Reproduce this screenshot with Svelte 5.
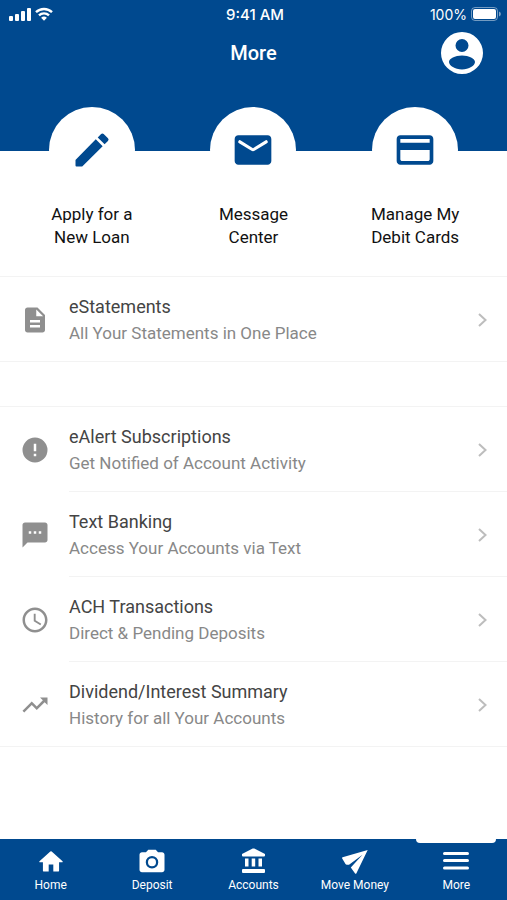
<script lang="ts">
  type Item = { title: string; detail: string; icon: string }

  const shortcuts = [
    { lines: ['Apply for a', 'New Loan'], icon: 'M3 17.6V20.5c0 .3.2.5.5.5h2.900c.2 0 .3 0 .4-.1L17.81 9.94l-3.75-3.75L3.100 17.250a.5.5 0 0 0-.1.350zM20.71 7.04a1 1 0 0 0 0-1.41l-2.34-2.34a1 1 0 0 0-1.41 0l-1.83 1.83 3.75 3.75 1.83-1.83z' },
    { lines: ['Message', 'Center'], icon: 'M20 4H4c-1.1 0-2 .9-2 2v12c0 1.1.9 2 2 2h16c1.1 0 2-.9 2-2V6c0-1.1-.9-2-2-2zm-.4 4.25l-6.54 4.09c-.65.41-1.47.41-2.12 0L4.4 8.25a.85.85 0 1 1 .9-1.44L12 11l6.7-4.19a.85.85 0 1 1 .9 1.44z' },
    { lines: ['Manage My', 'Debit Cards'], icon: 'M20 4H4c-1.11 0-2 .89-2 2v12c0 1.11.89 2 2 2h16c1.11 0 2-.89 2-2V6c0-1.11-.89-2-2-2zm-1 14H5c-.55 0-1-.45-1-1v-5h16v5c0 .55-.45 1-1 1zM20 8H4V6h16v2z' }
  ]

  const groups: Item[][] = [
    [
      { title: 'eStatements', detail: 'All Your Statements in One Place', icon: 'M14 2H6c-1.1 0-2 .9-2 2v16c0 1.1.89 2 1.99 2H18c1.1 0 2-.9 2-2V8l-6-6zm2 16H8v-2h8v2zm0-4H8v-2h8v2zm-3-5V3.5L18.5 9H13z' }
    ],
    [
      { title: 'eAlert Subscriptions', detail: 'Get Notified of Account Activity', icon: 'M12 2a10 10 0 1 0 0 20 10 10 0 0 0 0-20zm1 15h-2v-2h2v2zm0-4h-2V7h2v6z' },
      { title: 'Text Banking', detail: 'Access Your Accounts via Text', icon: 'M20 2H4c-1.1 0-2 .9-2 2v18l4-4h14c1.1 0 2-.9 2-2V4c0-1.1-.9-2-2-2zM9 11H7V9h2v2zm4 0h-2V9h2v2zm4 0h-2V9h2v2z' },
      { title: 'ACH Transactions', detail: 'Direct & Pending Deposits', icon: 'M11.99 2C6.47 2 2 6.48 2 12s4.47 10 9.99 10C17.52 22 22 17.52 22 12S17.52 2 11.99 2zM12 20c-4.42 0-8-3.58-8-8s3.58-8 8-8 8 3.58 8 8-3.58 8-8 8zm.5-13H11v6l5.25 3.15.75-1.23-4.5-2.67z' },
      { title: 'Dividend/Interest Summary', detail: 'History for all Your Accounts', icon: 'M16 6l2.29 2.29-4.88 4.88-4-4L2 16.59 3.41 18l6-6 4 4 6.3-6.29L22 12V6z' }
    ]
  ]

  const tabs = [
    { label: 'Home', box: '-1 -2 26 26', icon: 'M10 20v-6h4v6h4.5a.5.5 0 0 0 .5-.5V12h2.700a.4.4 0 0 0 .3-.7L12.600 2.700a1 1 0 0 0-1.200 0L2 11.300a.4.4 0 0 0 .3.7H5v7.500a.5.5 0 0 0 .5.5z' },
    { label: 'Deposit', box: '0 -1 24 24', icon: 'M12 8.8a3.2 3.2 0 1 0 0 6.4 3.2 3.2 0 0 0 0-6.4zM9 2L7.17 4H4c-1.1 0-2 .9-2 2v12c0 1.1.9 2 2 2h16c1.1 0 2-.9 2-2V6c0-1.1-.9-2-2-2h-3.17L15 2H9zm3 15a5 5 0 1 1 0-10 5 5 0 0 1 0 10z' },
    { label: 'Accounts', box: '0 0 30 30', icon: 'M14.700 2.600L4 8v1.500a1 1 0 0 0 1 1h21a1 1 0 0 0 1-1V8L16.300 2.600a2 2 0 0 0-1.600 0zM7 12.500h3.500V20.500H7zM13.700 12.500h3.500V20.500h-3.500zM20.500 12.500H24V20.500h-3.500zM5 23h21a1 1 0 0 1 1 1v2a1 1 0 0 1-1 1H5a1 1 0 0 1-1-1v-2a1 1 0 0 1 1-1z' },
    { label: 'Move Money', box: '0 0 30 30', icon: 'M27.700 4L2.600 11.200c-.6.2-.7.7-.4 1.200l3.300 5.600c.3.5.7.8 1.300.8H9L22.500 8.800 10.800 21.500l4.300 6c.4.5.9.4 1.200-.1z' },
    { label: 'More', box: '0 0 30 30', icon: 'M3.500 6h23a1.500 1.500 0 0 1 0 3h-23a1.500 1.500 0 0 1 0-3zM3.500 13h23a1.500 1.500 0 0 1 0 3h-23a1.500 1.500 0 0 1 0-3zM3.500 20.500h23a1.500 1.500 0 0 1 0 3h-23a1.500 1.500 0 0 1 0-3z' }
  ]

  let current = $state('More')
</script>

<div class="screen">
  <header>
    <div class="status">
      <div class="signal">
        <svg width="22" height="14" viewBox="0 0 22 14" aria-hidden="true">
          <rect x="0" y="9" width="4" height="5" rx="1" />
          <rect x="6" y="7" width="4" height="7" rx="1" />
          <rect x="12" y="4" width="4" height="10" rx="1" />
          <rect x="18" y="1" width="4" height="13" rx="1" />
        </svg>
        <svg width="18" height="14" viewBox="0 0 18 14" aria-hidden="true">
          <g fill="none" stroke="#fff" stroke-width="2.4">
            <path d="M1 5.2a11.5 11.5 0 0 1 16 0" />
            <path d="M4 8.4a7.2 7.2 0 0 1 10 0" />
          </g>
          <path d="M9 13.8l-2.9-3a4.2 4.2 0 0 1 5.8 0z" />
        </svg>
      </div>
      <time>9:41 AM</time>
      <div class="battery">
        <span>100%</span>
        <svg width="30" height="14" viewBox="0 0 30 14" aria-hidden="true">
          <rect x="0.5" y="0.5" width="26" height="13" rx="3.5" fill="none" stroke="#fff" opacity="0.45" />
          <rect x="2" y="2" width="23" height="10" rx="2" />
          <path d="M28 4.5v5a2.6 2.6 0 0 0 0-5z" opacity="0.5" />
        </svg>
      </div>
    </div>
    <div class="title">
      <h1>More</h1>
      <button class="profile" aria-label="Profile">
        <svg width="42" height="42" viewBox="0 0 42 42" aria-hidden="true">
          <path fill-rule="evenodd" d="M21 0a21 21 0 1 0 0 42 21 21 0 0 0 0-42zM21 7a6.5 6.5 0 1 1 0 13 6.5 6.5 0 0 1 0-13zM21 23.5c7 0 13 3 13 6.5s-6 7.5-13 7.5-13-4-13-7.5 6-6.5 13-6.5z" />
        </svg>
      </button>
    </div>
  </header>

  <nav class="shortcuts" aria-label="Shortcuts">
    {#each shortcuts as { lines, icon }}
      <button>
        <span class="circle">
          <svg width="44" height="44" viewBox="0 0 24 24" aria-hidden="true"><path d={icon} /></svg>
        </span>
        <span>{lines[0]}<br />{lines[1]}</span>
      </button>
    {/each}
  </nav>

  <main>
    {#each groups as items}
      <ul>
        {#each items as { title, detail, icon }}
          <li>
            <button>
              <svg class="icon" width="30" height="30" viewBox="0 0 24 24" aria-hidden="true"><path d={icon} /></svg>
              <span class="text">
                <span class="name">{title}</span>
                <span class="detail">{detail}</span>
              </span>
              <svg class="chevron" width="10" height="16" viewBox="0 0 10 16" aria-hidden="true">
                <path d="M1 2l6.5 6L1 14" />
              </svg>
            </button>
          </li>
        {/each}
      </ul>
    {/each}
  </main>

  <nav class="tabs" aria-label="Main">
    {#each tabs as { label, box, icon }}
      <button class:active={current === label} onclick={() => (current = label)}>
        <svg width="30" height="30" viewBox={box} aria-hidden="true"><path d={icon} /></svg>
        {label}
      </button>
    {/each}
  </nav>
</div>

<style>
  :global(body) {
    background: #fff;
    font-family: Roboto, sans-serif;
  }

  .screen {
    display: flex;
    flex-direction: column;
    min-height: 100vh;
  }

  button {
    padding: 0;
    border: none;
    background: none;
    color: inherit;
    font: inherit;
    cursor: pointer;
  }

  svg {
    flex: none;
    fill: currentColor;
  }

  header {
    height: 151px;
    background: #00498f;
    color: #fff;
  }

  .status,
  .title {
    display: grid;
    grid-template-columns: 1fr auto 1fr;
    align-items: center;
  }

  .status {
    height: 28px;
    padding: 0 6px 0 9px;
    font-family: Inter, sans-serif;
    font-size: 14px;
  }

  .status time {
    font-size: 15px;
    font-weight: 500;
  }

  .signal,
  .battery {
    display: flex;
    align-items: center;
    gap: 4px;
  }

  .battery {
    justify-content: flex-end;
  }

  .title {
    height: 49px;
    padding: 0 24px;
  }

  h1 {
    grid-column: 2;
    margin: 0;
    font-size: 20px;
    font-weight: 500;
  }

  .profile {
    display: flex;
    justify-self: end;
  }

  .shortcuts {
    display: grid;
    grid-template-columns: repeat(3, 1fr);
    margin-top: -44px;
    padding: 0 11px;
  }

  .shortcuts button {
    display: flex;
    flex-direction: column;
    align-items: center;
    gap: 10px;
    color: #111;
    font-size: 17px;
    line-height: 23px;
  }

  .circle {
    display: flex;
    align-items: center;
    justify-content: center;
    width: 86px;
    height: 86px;
    border-radius: 50%;
    background: #fff;
    color: #00498f;
  }

  main {
    flex: 1;
    display: flex;
    flex-direction: column;
    gap: 44px;
    padding: 27px 0;
  }

  ul {
    margin: 0;
    padding: 0;
    border: solid #f3f3f3;
    border-width: 1px 0;
    list-style: none;
  }

  li + li {
    background: linear-gradient(#f3f3f3, #f3f3f3) 69px 0 / 100% 1px no-repeat;
  }

  li button {
    display: flex;
    align-items: center;
    width: 100%;
    padding: 17px 19px 15px 20px;
    text-align: left;
  }

  li + li button {
    padding-top: 18px;
  }

  .icon {
    margin-right: 19px;
    color: #8f8f8f;
  }

  .text {
    flex: 1;
    display: flex;
    flex-direction: column;
    line-height: 26px;
  }

  .name {
    color: #444;
    font-size: 18px;
  }

  .detail {
    color: #888;
    font-size: 17px;
  }

  .chevron {
    fill: none;
    stroke: #bdbdbd;
    stroke-width: 2;
  }

  .tabs {
    display: grid;
    grid-template-columns: repeat(5, 1fr);
    height: 61px;
    background: #00498f;
    color: #fff;
  }

  .tabs button {
    position: relative;
    display: flex;
    flex-direction: column;
    align-items: center;
    padding-top: 7px;
    font-size: 12px;
    line-height: 18px;
  }

  .tabs .active::before {
    content: '';
    position: absolute;
    top: 0;
    width: 80px;
    height: 4px;
    border-radius: 0 0 4px 4px;
    background: #fff;
  }
</style>
